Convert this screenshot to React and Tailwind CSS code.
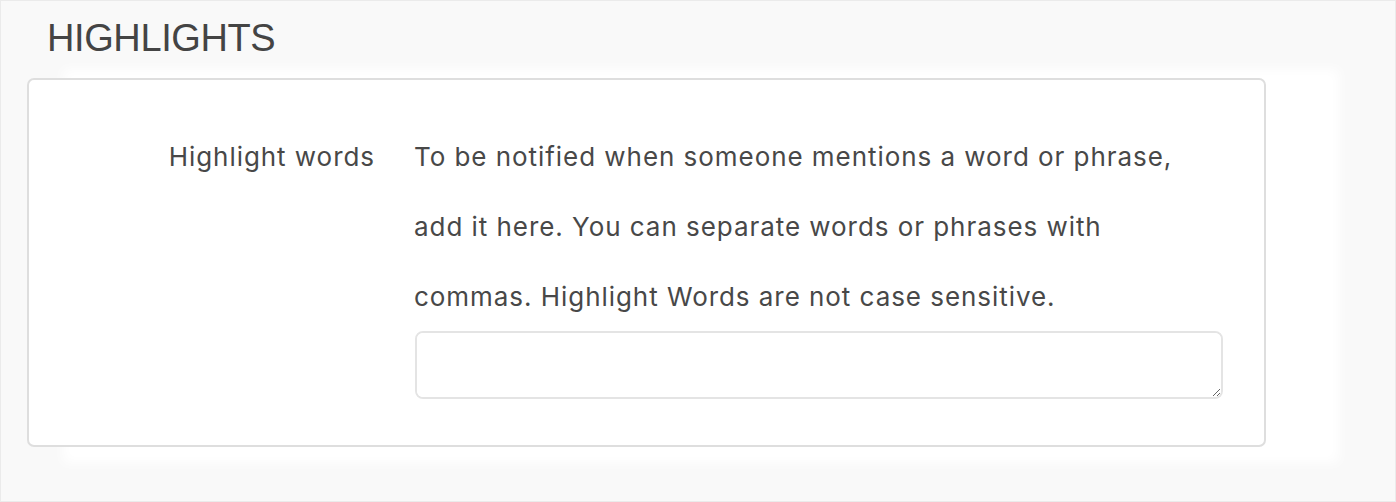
import React from 'react';

const App = () => {
  return (
    <div className="relative w-[1396px] h-[502px] overflow-hidden border border-[#ebebeb] bg-[#f9f9f9]">
      {/* soft white glow behind the card */}
      <div aria-hidden className="absolute left-[62px] top-[68px] w-[1276px] h-[394px] bg-white blur-[6px]" />

      <div className="relative pl-[26px] pt-[13px]">
        <h2 className="pl-[20px] text-[38px] leading-[48px] tracking-[-0.4px] text-[#444] font-['Liberation_Sans',Arial,sans-serif]">
          HIGHLIGHTS
        </h2>

        <div className="mt-[16px] flex w-[1239px] h-[369px] rounded-[7px] border-2 border-[#dedede] bg-white pt-[42px] font-['Inter',sans-serif] text-[26px] tracking-[0.95px] leading-[70px] text-[#484848]">
          <div className="w-[346px] shrink-0 text-right">Highlight words</div>
          <div className="ml-[40px] w-[808px]">
            <p className="-ml-[1px]">
              To be notified when someone mentions a word or phrase,
              <br />
              add it here. You can separate words or phrases with
              <br />
              commas. Highlight Words are not case sensitive.
            </p>
            <textarea className="block w-[808px] h-[68px] -mt-[1px] rounded-[8px] border-2 border-[#e4e4e4] bg-white outline-none" />
          </div>
        </div>
      </div>
    </div>
  );
};

export default App;
